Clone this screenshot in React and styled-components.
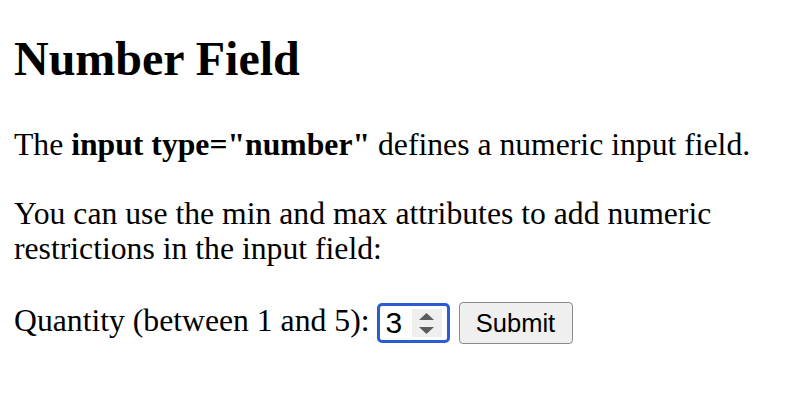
import React from "react";
import styled, { createGlobalStyle } from "styled-components";

const Global = createGlobalStyle`
  html, body { background: #fff; }
  body {
    margin: 0;
    font-family: "Liberation Serif", "Times New Roman", serif;
    font-size: 31.7px;
    color: #000;
  }
`;

const Page = styled.main`
  padding: 31px 14px;
`;

const Title = styled.h1`
  font-size: 48px;
  line-height: 56px;
  font-weight: bold;
  margin: 0 0 40px;
`;

const Para = styled.p`
  margin: 0 0 ${(p) => p.$gap}px;
  line-height: 35px;
`;

const Form = styled.form`
  display: flex;
  align-items: center;
  height: 42px;
  margin: 0;
`;

const Label = styled.label`
  line-height: 35px;
  padding-bottom: 5px;
  margin-right: 7px;
`;

const NumberBox = styled.div`
  box-sizing: border-box;
  display: flex;
  align-items: center;
  justify-content: space-between;
  width: 73px;
  height: 40px;
  border: 3px solid #2b5cd2;
  border-radius: 5px;
  padding: 0 5px 0 6px;
  margin-right: 9px;
`;

const NumberInput = styled.input`
  border: none;
  outline: none;
  padding: 0;
  width: 22px;
  font-family: "Liberation Sans", Arial, sans-serif;
  font-size: 30px;
  line-height: 34px;
  color: #000;
  background: transparent;
`;

const Spinner = styled.div`
  display: flex;
  flex-direction: column;
  align-items: center;
  justify-content: center;
  gap: 7px;
  width: 30px;
  height: 28px;
  background: #efefef;
`;

const Button = styled.button`
  box-sizing: border-box;
  height: 42px;
  width: 114px;
  background: #efefef;
  border: 1.5px solid #8a8a8a;
  border-radius: 4px;
  font-family: "Liberation Sans", Arial, sans-serif;
  font-size: 25.5px;
  color: #000;
  padding: 0;
`;

export default function App() {
  return (
    <>
      <Global />
      <Page>
        <Title>Number Field</Title>
        <Para $gap={34}>
          The <b>input type="number"</b> defines a numeric input field.
        </Para>
        <Para $gap={36}>
          You can use the min and max attributes to add numeric restrictions in
          the input field:
        </Para>
        <Form onSubmit={(e) => e.preventDefault()}>
          <Label htmlFor="quantity">Quantity (between 1 and 5):</Label>
          <NumberBox>
            <NumberInput id="quantity" type="text" defaultValue="3" readOnly />
            <Spinner>
              <svg width="15" height="7" viewBox="0 0 15 7">
                <path d="M7.5 0 L15 7 L0 7 Z" fill="#5c5c5c" />
              </svg>
              <svg width="15" height="7" viewBox="0 0 15 7">
                <path d="M0 0 L15 0 L7.5 7 Z" fill="#5c5c5c" />
              </svg>
            </Spinner>
          </NumberBox>
          <Button type="submit">Submit</Button>
        </Form>
      </Page>
    </>
  );
}
